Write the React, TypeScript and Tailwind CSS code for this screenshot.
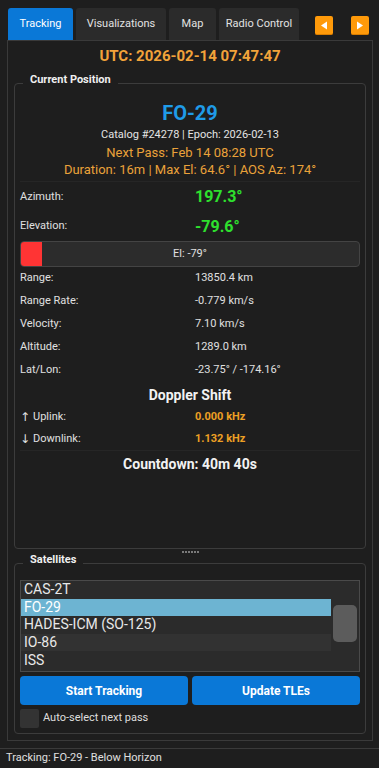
import React from "react";

const tabs = [
  { label: "Tracking", w: "w-[65px]", active: true },
  { label: "Visualizations", w: "w-[90px]", active: false },
  { label: "Map", w: "w-[47px]", active: false },
  { label: "Radio Control", w: "w-[80px]", active: false },
];

const stats = [
  { label: "Range:", value: "13850.4 km" },
  { label: "Range Rate:", value: "-0.779 km/s" },
  { label: "Velocity:", value: "7.10 km/s" },
  { label: "Altitude:", value: "1289.0 km" },
  { label: "Lat/Lon:", value: "-23.75° / -174.16°" },
];

const satellites = ["CAS-2T", "FO-29", "HADES-ICM (SO-125)", "IO-86", "ISS"];

function ArrowButton({ dir }: { dir: "left" | "right" }) {
  return (
    <button className="w-[18px] h-[19px] bg-[#ff9a0a] rounded-[2px] border-b border-[#d97d00] flex items-center justify-center">
      <svg width="8" height="9" viewBox="0 0 8 9">
        {dir === "left" ? (
          <polygon points="7,0.5 7,8.5 1,4.5" fill="#fff" />
        ) : (
          <polygon points="1,0.5 1,8.5 7,4.5" fill="#fff" />
        )}
      </svg>
    </button>
  );
}

function GroupBox({ title, className, children }: { title: string; className: string; children: React.ReactNode }) {
  return (
    <div className={`relative border border-[#3c3c3c] rounded-[4px] ${className}`}>
      <span className="absolute -top-[11px] left-[8px] px-[7px] bg-[#1e1e1e] text-[11px] font-bold text-[#f0f0f0] leading-[14px]">
        {title}
      </span>
      {children}
    </div>
  );
}

export default function App() {
  return (
    <div className="w-[379px] h-[768px] bg-[#1e1e1e] text-[#e0e0e0] font-['Roboto',sans-serif] flex flex-col overflow-hidden">
      {/* Tab bar */}
      <div className="h-10 flex items-end pl-2 pr-[10px]">
        <div className="flex gap-[3px]">
          {tabs.map((t) => (
            <div
              key={t.label}
              className={`${t.w} h-8 rounded-t-[3px] flex items-center justify-center text-[11px] ${
                t.active ? "bg-[#0a78d7] text-white" : "bg-[#2b2b2b] text-[#e2e2e2]"
              }`}
            >
              {t.label}
            </div>
          ))}
        </div>
        <div className="ml-auto flex gap-[18px] mb-[5px]">
          <ArrowButton dir="left" />
          <ArrowButton dir="right" />
        </div>
      </div>

      {/* Tab pane */}
      <div className="ml-[7px] w-[366px] h-[701px] border border-[#3a3a3a] px-[6px] flex flex-col">
        <div className="h-[30px] flex items-center justify-center text-[15px] font-bold text-[#f2a33a]">
          UTC: 2026-02-14 07:47:47
        </div>

        <GroupBox title="Current Position" className="mt-[12px] h-[466px] px-[5px]">
          <div className="pt-[17px] flex flex-col items-center">
            <div className="text-[20px] leading-[24px] font-bold text-[#1f9be8]">FO-29</div>
            <div className="mt-[3px] text-[11px] leading-[14px] text-[#e4e4e4]">Catalog #24278 | Epoch: 2026-02-13</div>
            <div className="mt-[2px] text-[13px] leading-[17px] text-[#eaa23a]">Next Pass: Feb 14 08:28 UTC</div>
            <div className="text-[13px] leading-[17px] text-[#eaa23a]">Duration: 16m | Max El: 64.6° | AOS Az: 174°</div>
          </div>
          <div className="mt-[3px] border-t border-[#262626]" />

          <div className="grid grid-cols-[175px_1fr]">
            <div className="h-[30px] flex items-center text-[11px]">Azimuth:</div>
            <div className="h-[30px] flex items-center text-[16px] font-bold text-[#2ee02e]">197.3°</div>
            <div className="h-[29px] flex items-center text-[11px]">Elevation:</div>
            <div className="h-[29px] flex items-center text-[16px] font-bold text-[#2ee02e]">-79.6°</div>
          </div>

          <div className="relative h-[26px] border border-[#444] rounded-[4px] bg-[#2c2c2c] flex items-center justify-center text-[11px]">
            <div className="absolute left-0 top-0 bottom-0 w-[21px] bg-[#ff3434] rounded-l-[3px]" />
            <span className="relative">El: -79°</span>
          </div>

          <div className="grid grid-cols-[175px_1fr]">
            {stats.map((s) => (
              <React.Fragment key={s.label}>
                <div className="h-[23px] flex items-center text-[11px]">{s.label}</div>
                <div className="h-[23px] flex items-center text-[11px]">{s.value}</div>
              </React.Fragment>
            ))}
          </div>

          <div className="h-[24px] flex items-end justify-center text-[14px] font-bold text-[#f2f2f2]">Doppler Shift</div>

          <div className="grid grid-cols-[175px_1fr]">
            <div className="h-[22px] flex items-center text-[11px]">
              <span className="font-['DejaVu_Sans',sans-serif] text-[12px] leading-none mr-[3px]">↑</span>Uplink:
            </div>
            <div className="h-[22px] flex items-center text-[11px] font-bold text-[#eda024]">0.000 kHz</div>
            <div className="h-[22px] flex items-center text-[11px]">
              <span className="font-['DejaVu_Sans',sans-serif] text-[12px] leading-none mr-[3px]">↓</span>Downlink:
            </div>
            <div className="h-[22px] flex items-center text-[11px] font-bold text-[#eda024]">1.132 kHz</div>
          </div>
          <div className="border-t border-[#262626]" />
          <div className="h-[26px] flex items-center justify-center text-[14px] font-bold text-[#f2f2f2]">
            Countdown: 40m 40s
          </div>
        </GroupBox>

        {/* Splitter */}
        <div className="h-[14px] flex justify-center pt-[2px]">
          <div className="flex gap-[1px] h-[2px]">
            {[0, 1, 2, 3, 4, 5].map((i) => (
              <div key={i} className="w-[2px] h-[2px] bg-[#7a7a7a]" />
            ))}
          </div>
        </div>

        <GroupBox title="Satellites" className="h-[171px] px-[5px] pt-[16px]">
          <div className="h-[92px] border border-[#4a4a4a] bg-[#2b2b2b] flex overflow-hidden">
            <div className="w-[310px] flex flex-col">
              {satellites.map((s, i) => (
                <div
                  key={s}
                  className={`h-[17.6px] shrink-0 pl-[3px] flex items-center text-[14px] ${
                    s === "FO-29"
                      ? "bg-[#6db4d2] text-white"
                      : i % 2 === 1
                      ? "bg-[#323232] text-[#e8e8e8]"
                      : "bg-[#2b2b2b] text-[#e8e8e8]"
                  }`}
                >
                  {s}
                </div>
              ))}
            </div>
            <div className="flex-1 pl-[2px] pr-[2px] pt-[24px]">
              <div className="h-[37px] rounded-[5px] bg-[#5c5c5c]" />
            </div>
          </div>

          <div className="mt-[4px] flex gap-[4px]">
            <button className="flex-1 h-[29px] rounded-[4px] bg-[#0a78d7] text-white text-[12px] font-bold">
              Start Tracking
            </button>
            <button className="flex-1 h-[29px] rounded-[4px] bg-[#0a78d7] text-white text-[12px] font-bold">
              Update TLEs
            </button>
          </div>

          <div className="mt-[4px] flex items-center gap-[4px]">
            <div className="w-[19px] h-[19px] rounded-[2px] bg-[#333333]" />
            <span className="text-[11px] text-[#dedede]">Auto-select next pass</span>
          </div>
        </GroupBox>
      </div>

      {/* Status bar */}
      <div className="mt-[7px] border-t border-[#3a3a3a] h-[20px] pl-[6px] flex items-center text-[11px] text-[#e0e0e0]">
        Tracking: FO-29 - Below Horizon
      </div>
    </div>
  );
}
